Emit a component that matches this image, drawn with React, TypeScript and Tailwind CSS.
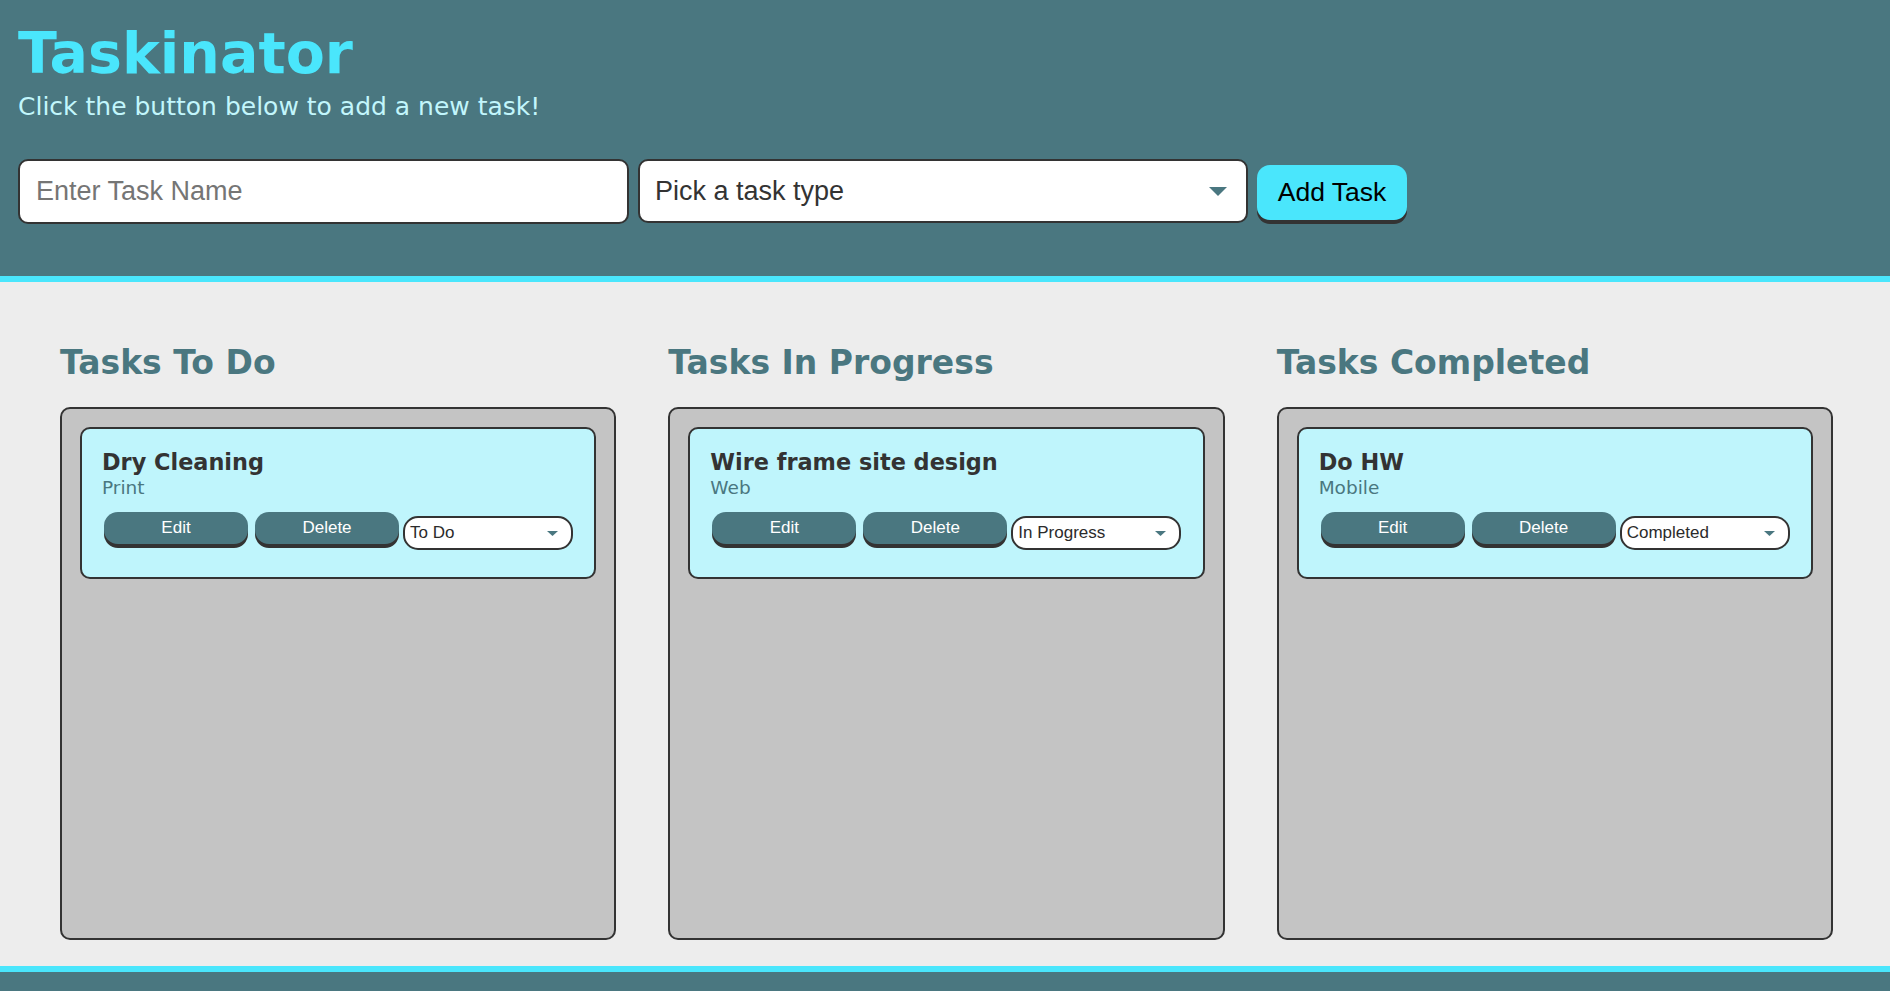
import React from "react";

type Task = { name: string; type: string; status: string };

const columns: { title: string; task: Task }[] = [
  { title: "Tasks To Do", task: { name: "Dry Cleaning", type: "Print", status: "To Do" } },
  { title: "Tasks In Progress", task: { name: "Wire frame site design", type: "Web", status: "In Progress" } },
  { title: "Tasks Completed", task: { name: "Do HW", type: "Mobile", status: "Completed" } },
];

function Caret({ className }: { className?: string }) {
  return (
    <svg viewBox="0 0 10 5" preserveAspectRatio="none" className={className}>
      <path d="M0 0h10L5 5z" fill="currentColor" />
    </svg>
  );
}

function TaskCard({ task }: { task: Task }) {
  return (
    <div className="rounded-[10px] border-2 border-[#333] bg-[#bff5fc] px-5 pt-5 pb-[27px]">
      <h3 className="text-[22.4px] leading-[26px] font-bold text-[#333]">{task.name}</h3>
      <span className="mt-[2px] block text-[18.5px] leading-[22px] text-[#4a7780]">{task.type}</span>
      <div className="mt-[13px] ml-[2px] flex items-start font-['Liberation_Sans',Arial,sans-serif] text-[17px]">
        <button className="h-8 w-[144px] rounded-[14px] bg-[#4a7780] text-white shadow-[0_4px_0_#333]">
          Edit
        </button>
        <button className="ml-[7px] h-8 w-[144px] rounded-[14px] bg-[#4a7780] text-white shadow-[0_4px_0_#333]">
          Delete
        </button>
        <div className="mt-1 ml-1 flex h-[34px] w-[170px] items-center justify-between rounded-[15px] border-2 border-[#333] bg-white pr-[13px] pl-[5px] text-[#2b2b2b]">
          <span>{task.status}</span>
          <Caret className="h-[5px] w-[11px] text-[#4a7780]" />
        </div>
      </div>
    </div>
  );
}

export default function App() {
  return (
    <div className="min-h-screen bg-[#ededed] font-['DejaVu_Sans',Verdana,sans-serif]">
      <header className="border-b-[6px] border-[#4ae6fc] bg-[#4a7780] px-[18px] pt-[25px] pb-[52px]">
        <h1 className="text-[57px] leading-[56px] font-bold text-[#4ae6fc]">Taskinator</h1>
        <p className="mt-[11px] text-[25px] leading-[29px] text-[#c2f6fc]">
          Click the button below to add a new task!
        </p>
        <form className="mt-[38px] flex items-start gap-[9px] font-['Liberation_Sans',Arial,sans-serif] text-[27px]">
          <input
            type="text"
            placeholder="Enter Task Name"
            className="h-[65px] w-[611px] rounded-[10px] border-2 border-[#333] bg-white px-4 text-[#333] outline-none placeholder:text-[#757575]"
          />
          <div className="flex h-[64px] w-[610px] items-center justify-between rounded-[10px] border-2 border-[#333] bg-white pr-[19px] pl-[15px] text-[#333]">
            <span>Pick a task type</span>
            <Caret className="h-[9px] w-[18px] text-[#4a7780]" />
          </div>
          <button
            type="button"
            className="mt-[6px] h-[55px] w-[150px] rounded-[13px] bg-[#4ae6fc] text-[26.5px] text-black shadow-[0_4px_0_#333]"
          >
            Add Task
          </button>
        </form>
      </header>

      <main className="grid grid-cols-3 gap-[52px] pt-[62px] pr-[57px] pb-[26px] pl-[60px]">
        {columns.map((col) => (
          <section key={col.title}>
            <h2 className="text-[33px] leading-[37px] font-bold text-[#4a7780]">{col.title}</h2>
            <div className="mt-[26px] h-[533px] rounded-[10px] border-2 border-[#333] bg-[#c4c4c4] p-[18px]">
              <TaskCard task={col.task} />
            </div>
          </section>
        ))}
      </main>

      <footer className="h-[80px] border-t-[6px] border-[#4ae6fc] bg-[#4a7780]" />
    </div>
  );
}
